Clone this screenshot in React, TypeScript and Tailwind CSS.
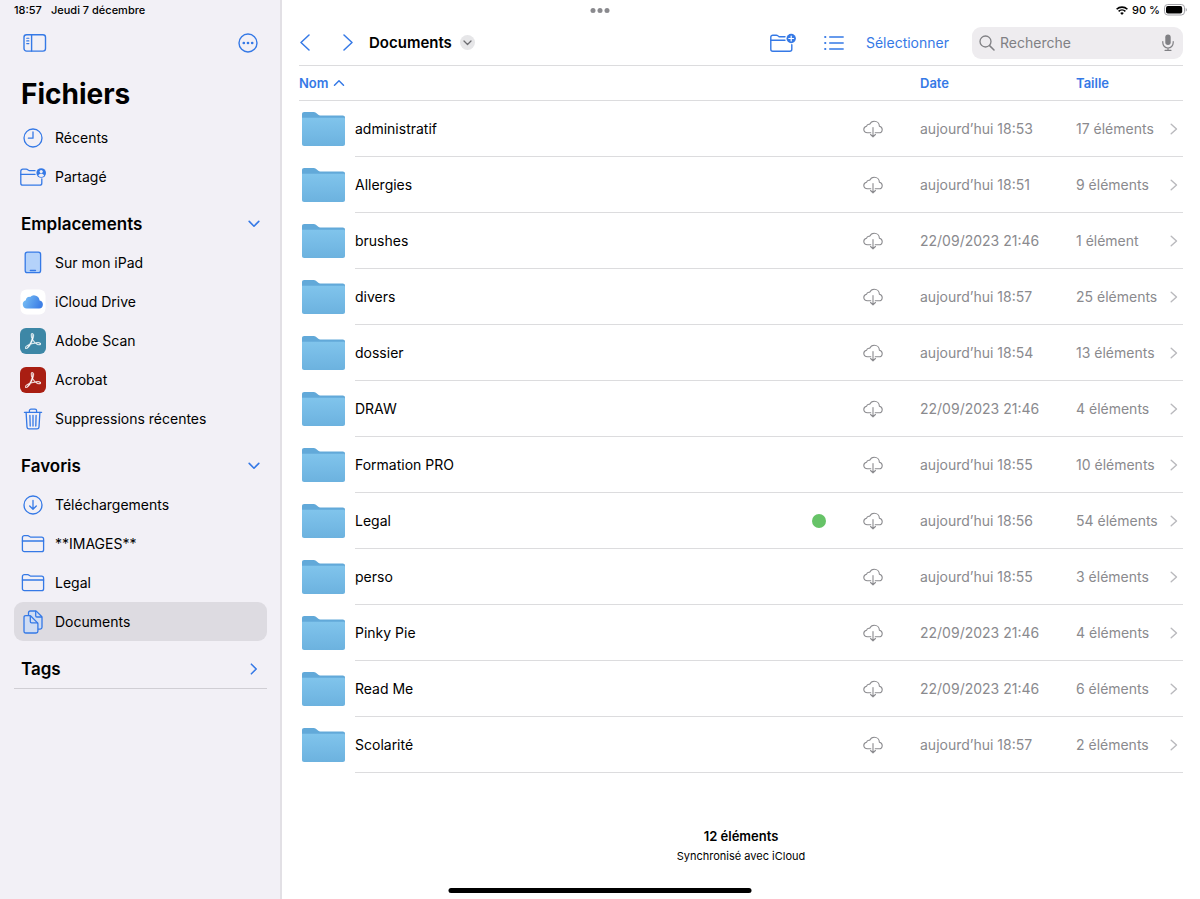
import { ReactNode } from 'react';
import { clsx } from 'clsx';

interface IconProps {
  className?: string;
}

interface FolderRow {
  name: string;
  date: string;
  size: string;
  tagged?: boolean;
}

const FOLDERS: FolderRow[] = [
  { name: 'administratif', date: 'aujourd’hui 18:53', size: '17 éléments' },
  { name: 'Allergies', date: 'aujourd’hui 18:51', size: '9 éléments' },
  { name: 'brushes', date: '22/09/2023 21:46', size: '1 élément' },
  { name: 'divers', date: 'aujourd’hui 18:57', size: '25 éléments' },
  { name: 'dossier', date: 'aujourd’hui 18:54', size: '13 éléments' },
  { name: 'DRAW', date: '22/09/2023 21:46', size: '4 éléments' },
  { name: 'Formation PRO', date: 'aujourd’hui 18:55', size: '10 éléments' },
  { name: 'Legal', date: 'aujourd’hui 18:56', size: '54 éléments', tagged: true },
  { name: 'perso', date: 'aujourd’hui 18:55', size: '3 éléments' },
  { name: 'Pinky Pie', date: '22/09/2023 21:46', size: '4 éléments' },
  { name: 'Read Me', date: '22/09/2023 21:46', size: '6 éléments' },
  { name: 'Scolarité', date: 'aujourd’hui 18:57', size: '2 éléments' },
];

// Icons

function Line({
  w,
  h,
  stroke = 1.4,
  className,
  children,
}: {
  w: number;
  h: number;
  stroke?: number;
  className?: string;
  children: ReactNode;
}) {
  return (
    <svg
      width={w}
      height={h}
      viewBox={`0 0 ${w} ${h}`}
      fill="none"
      stroke="currentColor"
      strokeWidth={stroke}
      strokeLinecap="round"
      strokeLinejoin="round"
      aria-hidden="true"
      className={clsx('shrink-0', className)}
    >
      {children}
    </svg>
  );
}

const SidebarIcon = () => (
  <Line w={24} h={20}>
    <rect x="1" y="1.7" width="21.5" height="16.4" rx="2.6" />
    <path d="M8.6 1.7v16.4" />
    <path d="M3.7 5.2h2.2M3.7 7.9h2.2M3.7 10.6h2.2" strokeWidth="1.1" />
  </Line>
);

const MoreIcon = () => (
  <Line w={20} h={20}>
    <circle cx="10" cy="10" r="9" />
    <g fill="currentColor" stroke="none">
      <circle cx="5.8" cy="10" r="1.35" />
      <circle cx="10" cy="10" r="1.35" />
      <circle cx="14.2" cy="10" r="1.35" />
    </g>
  </Line>
);

const ClockIcon = () => (
  <Line w={20} h={20} stroke={1.3}>
    <circle cx="10" cy="10" r="9" />
    <path d="M10 4v6.2H5.4" />
  </Line>
);

const DownloadIcon = () => (
  <Line w={20} h={20} stroke={1.3}>
    <circle cx="10" cy="10" r="9" />
    <path d="M10 5.4v8.8M6.7 11l3.3 3.3 3.3-3.3" />
  </Line>
);

const FolderIcon = () => (
  <Line w={24} h={20} stroke={1.3}>
    <path d="M1.4 15.700V3.700a2 2 0 0 1 2-2h3.300q.9 0 1.500.5l.8.6q.6.400 1.400.400h10.200a2 2 0 0 1 2 2v10.500a2 2 0 0 1-2 2H3.400a2 2 0 0 1-2-2z" />
    <path d="M1.4 7h21.2" />
  </Line>
);

const SharedFolderIcon = () => (
  <Line w={26} h={20} stroke={1.3}>
    <path d="M15 3.7H10q-.8 0-1.4-.4l-.8-.6q-.6-.5-1.5-.5H2.8a2 2 0 0 0-2 2v12a2 2 0 0 0 2 2h17a2 2 0 0 0 2-2v-4.4" />
    <path d="M.8 7.4h14.2" />
    <circle cx="21.2" cy="6" r="4.8" fill="currentColor" stroke="none" />
    <circle cx="21.2" cy="4.6" r="1.6" fill="#f2f0f6" stroke="none" />
    <path d="M18.3 8.700c.5-1.5 1.6-2 2.9-2s2.4.5 2.9 2a4.2 4.2 0 0 1-5.8 0z" fill="#f2f0f6" stroke="none" />
  </Line>
);

const NewFolderIcon = () => (
  <Line w={26} h={20}>
    <path d="M15 3.7H10q-.8 0-1.4-.4l-.8-.6q-.6-.5-1.5-.5H2.8a2 2 0 0 0-2 2v12a2 2 0 0 0 2 2h17a2 2 0 0 0 2-2v-4.4" />
    <path d="M.8 7.2h14.2" />
    <circle cx="21.2" cy="5.5" r="4.7" fill="currentColor" stroke="none" />
    <path d="M21.2 3.1v4.8M18.8 5.500h4.8" stroke="#fff" strokeWidth="1.2" />
  </Line>
);

const IpadIcon = () => (
  <Line w={18} h={23} stroke={1.3}>
    <rect x="1.2" y="1.2" width="15.4" height="20.4" rx="2.2" fill="#b4d2fa" />
    <path d="M6.3 19.5h5.2" />
  </Line>
);

const ICloudIcon = () => (
  <svg width="26" height="26" viewBox="0 0 26 26" aria-hidden="true" className="shrink-0">
    <defs>
      <linearGradient id="icloud" x1="0" y1="0" x2="1" y2="0.3">
        <stop offset="0" stopColor="#7cc4f6" />
        <stop offset="1" stopColor="#3f80e6" />
      </linearGradient>
    </defs>
    <rect x="0.5" y="0.5" width="25" height="25" rx="6" fill="#fff" />
    <path
      d="M6.8 19.6a4.3 4.3 0 0 1-1-8.4 3.4 3.4 0 0 1 4.3-3.2 5.6 5.6 0 0 1 9.5 3.5 4.1 4.1 0 0 1-.4 8.1z"
      fill="url(#icloud)"
    />
  </svg>
);

const AcrobatIcon = ({ className }: IconProps) => (
  <span className={clsx('flex size-[26px] shrink-0 items-center justify-center rounded-md text-white', className)}>
    <svg width="16" height="16" viewBox="0 0 24 24" fill="currentColor" stroke="currentColor" strokeWidth="0.6" aria-hidden="true">
      <path d="M23.63 15.3c-.71-.745-2.166-1.17-4.224-1.17-1.1 0-2.377.106-3.761.354a19.443 19.443 0 0 1-2.307-2.661c-.532-.71-.994-1.49-1.42-2.236.817-2.484 1.207-4.507 1.207-5.962 0-1.632-.603-3.336-2.342-3.336-.532 0-1.065.32-1.349.781-.78 1.384-.425 4.4.923 7.381a60.277 60.277 0 0 1-1.703 4.507c-.568 1.349-1.207 2.733-1.917 4.01C2.834 18.53.314 20.34.03 21.758c-.106.533.071 1.03.462 1.42.142.107.639.533 1.49.533 2.59 0 5.323-4.188 6.707-6.707 1.065-.355 2.13-.71 3.194-.994a34.963 34.963 0 0 1 3.407-.745c2.732 2.448 5.145 2.839 6.352 2.839 1.49 0 2.023-.604 2.2-1.1.32-.64.106-1.349-.213-1.704zm-1.42 1.03c-.107.532-.64.887-1.384.887-.213 0-.39-.036-.604-.071-1.348-.32-2.626-.994-3.903-2.059a17.717 17.717 0 0 1 2.98-.248c.746 0 1.385.035 1.81.142.497.106 1.278.426 1.1 1.348zm-7.524-1.668a38.01 38.01 0 0 0-2.945.674 39.68 39.68 0 0 0-2.52.745 40.05 40.05 0 0 0 1.207-2.555c.426-.994.78-2.023 1.136-2.981.354.603.745 1.207 1.135 1.739a50.127 50.127 0 0 0 1.987 2.378zM10.038 1.46a.768.768 0 0 1 .674-.425c.745 0 .887.851.887 1.526 0 1.135-.355 2.874-.958 4.861-1.03-2.768-1.1-5.074-.603-5.962zM6.134 17.997c-1.81 2.981-3.549 4.826-4.613 4.826a.872.872 0 0 1-.532-.177c-.213-.213-.32-.461-.249-.745.213-1.065 2.271-2.555 5.394-3.904z" />
    </svg>
  </span>
);

const TrashIcon = () => (
  <Line w={20} h={22} stroke={1.3}>
    <path d="M1.4 4.3h17.2M6.4 4.2V2.7c0-.9.7-1.5 1.6-1.5h4c.9 0 1.6.6 1.6 1.5v1.5" />
    <path d="M3.1 4.4l.9 14.7c.1 1.1.9 1.8 2 1.8h8c1.1 0 1.9-.7 2-1.8l.9-14.7" />
    <path d="M6.9 7.3l.3 10.8M10 7.3v10.8M13.1 7.3l-.3 10.8" />
  </Line>
);

const DocumentsIcon = () => (
  <Line w={20} h={24} stroke={1.3}>
    <path d="M5.5 5V2.8c0-1.2.6-1.8 1.8-1.8h5.1c.6 0 1 .2 1.4.6l4.6 4.7c.4.4.6.8.6 1.4v9.6c0 1.2-.6 1.8-1.800 1.8h-2" fill="#cfdcf3" />
    <path d="M12.7 1.2v4.6c0 .8.4 1.2 1.2 1.2h4.8" />
    <path d="M1 7.4c0-1.2.6-1.8 1.8-1.8h3.8c.6 0 1 .2 1.4.6l6.3 6.4c.4.4.6.8.6 1.4v7.2c0 1.2-.6 1.8-1.8 1.8H2.8C1.6 23 1 22.4 1 21.2z" fill="#cfdcf3" />
    <path d="M7.3 5.8v5.8c0 .9.4 1.3 1.3 1.3h6" />
  </Line>
);

const ListIcon = () => (
  <Line w={20} h={16}>
    <path d="M5.7 2h13.5M5.7 8h13.5M5.7 14h13.5" />
    <path d="M1.2 2h.1M1.2 8h.1M1.2 14h.1" strokeWidth="2.2" />
  </Line>
);

const CloudDownloadIcon = () => (
  <Line w={20} h={18} stroke={1.1}>
    <path d="M7.8 12.8H4.4C2.3 12.8.8 11.4.8 9.500c0-1.700 1.100-2.900 2.700-3.200C3.8 4.9 5.2 4 6.7 4.3 7.6 2.3 9.2 1.2 11.2 1.2c3 0 5.1 2.2 5.2 5 1.7.4 2.8 1.6 2.8 3.2 0 1.900-1.500 3.400-3.500 3.400h-3.500" />
    <path d="M10 7.6v9.2M7.6 14.5l2.4 2.4 2.4-2.4" />
  </Line>
);

const BigFolderIcon = () => (
  <svg width="43" height="34" viewBox="0 0 43 34" aria-hidden="true">
    <defs>
      <linearGradient id="folder" x1="0" y1="0" x2="0" y2="1">
        <stop offset="0" stopColor="#80c4ec" />
        <stop offset="1" stopColor="#6cb2df" />
      </linearGradient>
    </defs>
    <path d="M0 2.2C0 .8.8 0 2.2 0h9.4c1 0 1.6.2 2.3.8l2.4 2c.6.5 1.1.7 2 .7h22.4c1.5 0 2.3.8 2.3 2.2V20H0z" fill="#62a9d9" />
    <path d="M0 5.800h41.5c1 0 1.5.5 1.5 1.5v24.500c0 1.400-.8 2.200-2.200 2.200H2.2C.8 34 0 33.2 0 31.8z" fill="url(#folder)" />
  </svg>
);

const SearchIcon = () => (
  <Line w={16} h={16} stroke={1.3}>
    <circle cx="6.5" cy="6.5" r="5.5" />
    <path d="M10.6 10.6l4.4 4.4" strokeWidth="1.5" />
  </Line>
);

const MicIcon = () => (
  <Line w={12} h={17} stroke={1.2}>
    <rect x="3.3" y="0.5" width="5.4" height="10.5" rx="2.7" fill="currentColor" stroke="none" />
    <path d="M.8 7.5v1.3a5.2 5.2 0 0 0 10.4 0V7.5M6 14v2.2M3 16.3h6" />
  </Line>
);

const WifiIcon = () => (
  <Line w={12} h={9} stroke={1.6}>
    <path d="M.6 3.300a7.700 7.700 0 0 1 10.800 0M2.600 5.400a4.900 4.900 0 0 1 6.800 0" strokeLinecap="butt" />
    <path d="M4.200 7a2.600 2.600 0 0 1 3.600 0L6 8.900z" fill="currentColor" stroke="none" />
  </Line>
);

const BatteryIcon = () => (
  <svg width="23" height="12" viewBox="0 0 23 12" aria-hidden="true">
    <rect x="0.5" y="0.5" width="20" height="10.5" rx="3.2" fill="none" stroke="#a3a3a8" />
    <rect x="2" y="2" width="16.2" height="7.5" rx="1.9" fill="#000" />
    <path d="M21.7 4v3.6c.8-.3 1.2-1 1.2-1.8s-.4-1.5-1.2-1.8z" fill="#a3a3a8" />
  </svg>
);

const ChevronDown = ({ className }: IconProps) => (
  <Line w={12} h={8} stroke={1.6} className={className}>
    <path d="M1.2 1.4L6 6.2l4.8-4.8" />
  </Line>
);

// Sidebar

function SidebarItem({ icon, label, active }: { icon: ReactNode; label: string; active?: boolean }) {
  return (
    <li>
      <a
        href="#"
        aria-current={active ? 'page' : undefined}
        className={clsx('flex h-[39px] items-center gap-[10px] rounded-[9px] px-[7px]', active && 'bg-[#dddbe1]')}
      >
        <span className="flex w-6 shrink-0 justify-center text-[#3579e6]">{icon}</span>
        <span>{label}</span>
      </a>
    </li>
  );
}

function SidebarSection({ title, children }: { title: string; children?: ReactNode }) {
  const open = Boolean(children);
  return (
    <section className={clsx('mt-[9px]', !open && 'border-b border-[#d0ced4]')}>
      <h2>
        <button
          type="button"
          aria-expanded={open}
          className="flex h-[38px] w-full items-center justify-between px-[7px] text-[17px] font-semibold"
        >
          {title}
          <ChevronDown className={clsx('text-[#3579e6]', !open && '-rotate-90')} />
        </button>
      </h2>
      {open && <ul>{children}</ul>}
    </section>
  );
}

function Sidebar() {
  return (
    <aside className="w-[282px] shrink-0 border-r-2 border-[#e2e0e5] bg-[#f2f0f6] pr-[13px] pl-[14px]">
      <div className="flex h-5 items-center gap-[9px] text-[11px] font-medium">
        <span>18:57</span>
        <span>Jeudi 7 décembre</span>
      </div>
      <div className="flex h-[46px] items-center justify-between px-[9px] text-[#3579e6]">
        <button type="button" aria-label="Barre latérale">
          <SidebarIcon />
        </button>
        <button type="button" aria-label="Plus">
          <MoreIcon />
        </button>
      </div>
      <h1 className="flex h-[52px] items-end px-[7px] pb-1 text-[28px] leading-10 font-bold">Fichiers</h1>
      <nav>
        <ul>
          <SidebarItem icon={<ClockIcon />} label="Récents" />
          <SidebarItem icon={<SharedFolderIcon />} label="Partagé" />
        </ul>
        <SidebarSection title="Emplacements">
          <SidebarItem icon={<IpadIcon />} label="Sur mon iPad" />
          <SidebarItem icon={<ICloudIcon />} label="iCloud Drive" />
          <SidebarItem icon={<AcrobatIcon className="bg-[#3d87a6]" />} label="Adobe Scan" />
          <SidebarItem icon={<AcrobatIcon className="bg-[#a91e12]" />} label="Acrobat" />
          <SidebarItem icon={<TrashIcon />} label="Suppressions récentes" />
        </SidebarSection>
        <SidebarSection title="Favoris">
          <SidebarItem icon={<DownloadIcon />} label="Téléchargements" />
          <SidebarItem icon={<FolderIcon />} label="**IMAGES**" />
          <SidebarItem icon={<FolderIcon />} label="Legal" />
          <SidebarItem icon={<DocumentsIcon />} label="Documents" active />
        </SidebarSection>
        <SidebarSection title="Tags" />
      </nav>
    </aside>
  );
}

// Main pane

function Toolbar() {
  return (
    <header className="flex h-[46px] items-center border-b border-[#dcdcde] text-[#3579e6]">
      <button type="button" aria-label="Précédent">
        <Line w={12} h={17} stroke={1.5}>
          <path d="M10 1L2 8.5l8 7.5" />
        </Line>
      </button>
      <button type="button" aria-label="Suivant" className="ml-[31px]">
        <Line w={12} h={17} stroke={1.5}>
          <path d="M2 1l8 7.5L2 16" />
        </Line>
      </button>
      <button type="button" className="ml-[15px] flex items-center gap-2 text-[15px] font-semibold text-black">
        Documents
        <span className="flex size-[15px] items-center justify-center rounded-full bg-[#e6e6e8] text-[#6c6c70]">
          <Line w={9} h={6} stroke={1.3}>
            <path d="M1 1l3.5 3.5L8 1" />
          </Line>
        </span>
      </button>
      <div className="ml-auto flex items-center">
        <button type="button" aria-label="Nouveau dossier">
          <NewFolderIcon />
        </button>
        <button type="button" aria-label="Présentation par liste" className="ml-7">
          <ListIcon />
        </button>
        <button type="button" className="ml-[22px]">
          Sélectionner
        </button>
        <div className="ml-[23px] flex h-8 w-[211px] items-center gap-[5px] rounded-[9px] bg-[#eeecef] px-[7px] text-[#808084]">
          <SearchIcon />
          <input
            type="search"
            aria-label="Recherche"
            placeholder="Recherche"
            className="min-w-0 flex-1 bg-transparent outline-none placeholder:text-[#808084]"
          />
          <button type="button" aria-label="Dicter" className="pr-[2px]">
            <MicIcon />
          </button>
        </div>
      </div>
    </header>
  );
}

function FileTable() {
  return (
    <table className="w-full table-fixed border-separate border-spacing-0 text-left">
      <colgroup>
        <col className="w-14" />
        <col />
        <col className="w-[51px]" />
        <col className="w-[57px]" />
        <col className="w-[156px]" />
        <col className="w-[94px]" />
        <col className="w-[13px]" />
      </colgroup>
      <thead className="text-[13px] text-[#3579e6] [&_th]:h-[35px] [&_th]:border-b [&_th]:border-[#dcdcde] [&_th]:font-semibold">
        <tr>
          <th colSpan={4} scope="col" aria-sort="ascending">
            <button type="button" className="flex items-center gap-1">
              Nom
              <Line w={12} h={8} stroke={1.5}>
                <path d="M1.5 6.2L6 1.8l4.5 4.4" />
              </Line>
            </button>
          </th>
          <th scope="col">
            <button type="button">Date</button>
          </th>
          <th scope="col" colSpan={2}>
            <button type="button">Taille</button>
          </th>
        </tr>
      </thead>
      <tbody className="[&_td]:h-14">
        {FOLDERS.map((folder) => (
          <tr key={folder.name} className="text-[#8a8a8e] [&>td+td]:border-b [&>td+td]:border-[#dcdcde]">
            <td className="pl-[3px]">
              <BigFolderIcon />
            </td>
            <td className="text-black">{folder.name}</td>
            <td>{folder.tagged && <span className="block size-[14px] rounded-full bg-[#66c367]" />}</td>
            <td>
              <CloudDownloadIcon />
            </td>
            <td>{folder.date}</td>
            <td className="whitespace-nowrap">{folder.size}</td>
            <td>
              <Line w={8} h={12} stroke={1.4} className="text-[#b9b9bd]">
                <path d="M1.2 1.2L6.5 6l-5.3 4.8" />
              </Line>
            </td>
          </tr>
        ))}
      </tbody>
    </table>
  );
}

export default function App() {
  return (
    <div className="relative flex min-h-screen bg-white font-[Inter,'Liberation_Sans',sans-serif] text-[14px] leading-5 text-black">
      <Sidebar />
      <main className="min-w-0 flex-1 pr-[17px] pl-[17px]">
        <div className="-mr-1 flex h-5 items-center justify-end gap-1 text-[11px] font-medium">
          <WifiIcon />
          <span>90 %</span>
          <BatteryIcon />
        </div>
        <Toolbar />
        <FileTable />
        <footer className="mt-[53px] pb-8 text-center">
          <p className="text-[13px] font-semibold">12 éléments</p>
          <p className="text-[11px]">Synchronisé avec iCloud</p>
        </footer>
      </main>

      {/* Multitasking dots and home indicator float over both panes */}
      <div className="absolute top-2 left-1/2 flex -translate-x-1/2 gap-[2px]" aria-hidden="true">
        <span className="size-[5px] rounded-full bg-[#8a8a8e]" />
        <span className="size-[5px] rounded-full bg-[#8a8a8e]" />
        <span className="size-[5px] rounded-full bg-[#8a8a8e]" />
      </div>
      <div className="absolute bottom-[6px] left-1/2 h-[5px] w-[303px] -translate-x-1/2 rounded-full bg-black" />
    </div>
  );
}
